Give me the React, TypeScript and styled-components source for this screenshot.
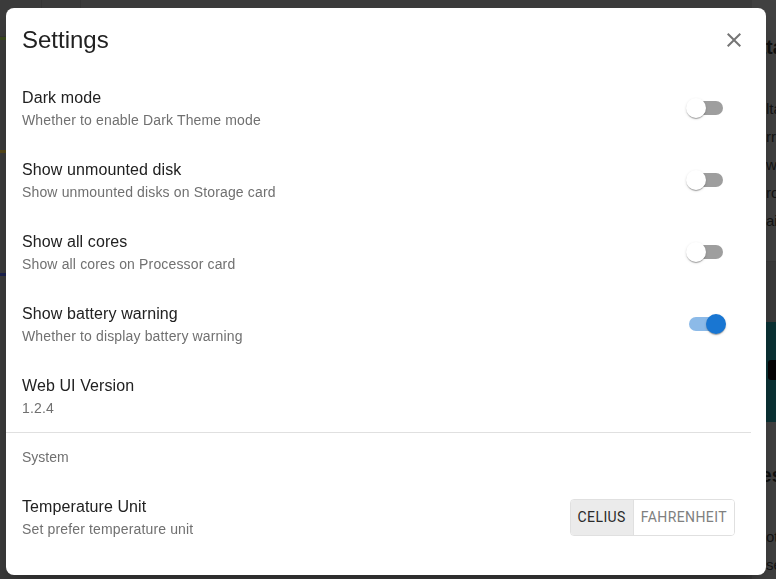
import { useState } from "react";
import styled, { createGlobalStyle } from "styled-components";

const GlobalStyle = createGlobalStyle`
  html, body {
    margin: 0;
    padding: 0;
    width: 776px;
    height: 579px;
    overflow: hidden;
    background: #3c3c3c;
    font-family: "Liberation Sans", Arial, sans-serif;
  }
  * {
    box-sizing: border-box;
  }
`;

type Setting = {
  key: string;
  title: string;
  desc: string;
};

const switchSettings: Setting[] = [
  { key: "dark", title: "Dark mode", desc: "Whether to enable Dark Theme mode" },
  { key: "disk", title: "Show unmounted disk", desc: "Show unmounted disks on Storage card" },
  { key: "cores", title: "Show all cores", desc: "Show all cores on Processor card" },
  { key: "battery", title: "Show battery warning", desc: "Whether to display battery warning" },
];

const App = () => {
  const [values, setValues] = useState<Record<string, boolean>>({
    dark: false,
    disk: false,
    cores: false,
    battery: true,
  });
  const [unit, setUnit] = useState<"celius" | "fahrenheit">("celius");

  const toggle = (key: string) => {
    setValues({ ...values, [key]: !values[key] });
  };

  return (
    <>
      <GlobalStyle />
      <Page>
        <LeftColumn>
          <TopBar>
            <TopTab $w={42} />
            <TopTab $w={39} />
          </TopBar>
          <Streak $color="#3b4a1e" />
          <Spacer $h={110} />
          <Streak $color="#57491a" />
          <Spacer $h={120} />
          <Streak $color="#1c2250" />
        </LeftColumn>
        <RightColumn>
          <BgCard $h={262}>
            <BgHeading>ata</BgHeading>
            <BgLines>
              <BgLine>ltage</BgLine>
              <BgLine>rrent</BgLine>
              <BgLine>wer</BgLine>
              <BgLine>roduct</BgLine>
              <BgLine>ail</BgLine>
            </BgLines>
          </BgCard>
          <Spacer $h={60} />
          <TealCard>
            <TealIcon />
          </TealCard>
          <BgCard $h={200}>
            <BgHeading $top={42}>les</BgHeading>
            <BgLines $top={40}>
              <BgLine>otal</BgLine>
              <BgLine>sed</BgLine>
            </BgLines>
          </BgCard>
        </RightColumn>
      </Page>

      <Backdrop>
        <Dialog>
          <DialogHeader>
            <DialogTitle>Settings</DialogTitle>
            <CloseButton aria-label="close">
              <svg width="24" height="24" viewBox="0 0 24 24">
                <path
                  fill="currentColor"
                  d="M19 6.41 17.59 5 12 10.59 6.41 5 5 6.41 10.59 12 5 17.59 6.41 19 12 13.41 17.59 19 19 17.59 13.41 12z"
                />
              </svg>
            </CloseButton>
          </DialogHeader>

          <List>
            {switchSettings.map((s) => (
              <ListItem key={s.key}>
                <ItemText>
                  <Primary>{s.title}</Primary>
                  <Secondary>{s.desc}</Secondary>
                </ItemText>
                <SwitchRoot onClick={() => toggle(s.key)}>
                  <Track $on={values[s.key]} />
                  <Thumb $on={values[s.key]} />
                </SwitchRoot>
              </ListItem>
            ))}
            <ListItem>
              <ItemText>
                <Primary>Web UI Version</Primary>
                <Secondary>1.2.4</Secondary>
              </ItemText>
            </ListItem>
          </List>

          <Divider />

          <List>
            <Subheader>System</Subheader>
            <ListItem>
              <ItemText>
                <Primary>Temperature Unit</Primary>
                <Secondary>Set prefer temperature unit</Secondary>
              </ItemText>
              <ToggleGroup>
                <ToggleButton
                  $selected={unit === "celius"}
                  onClick={() => setUnit("celius")}
                >
                  Celius
                </ToggleButton>
                <ToggleButton
                  $selected={unit === "fahrenheit"}
                  onClick={() => setUnit("fahrenheit")}
                >
                  Fahrenheit
                </ToggleButton>
              </ToggleGroup>
            </ListItem>
          </List>
        </Dialog>
      </Backdrop>
    </>
  );
};

export default App;

/* dimmed page behind the dialog */

const Page = styled.div`
  display: flex;
  width: 776px;
  height: 579px;
  overflow: hidden;
`;

const LeftColumn = styled.div`
  display: flex;
  flex-direction: column;
  width: 752px;
  flex-shrink: 0;
`;

const TopBar = styled.div`
  display: flex;
  height: 37px;
  flex-shrink: 0;
  border-bottom: 1px solid #353535;
`;

const TopTab = styled.div<{ $w: number }>`
  width: ${(p) => p.$w}px;
  border-right: 1px solid #363636;
`;

const Streak = styled.div<{ $color: string }>`
  height: 3px;
  width: 10px;
  flex-shrink: 0;
  background: ${(p) => p.$color};
`;

const Spacer = styled.div<{ $h: number }>`
  height: ${(p) => p.$h}px;
  flex-shrink: 0;
`;

const RightColumn = styled.div`
  display: flex;
  flex-direction: column;
  width: 200px;
  flex-shrink: 0;
`;

const BgCard = styled.div<{ $h: number }>`
  height: ${(p) => p.$h}px;
  flex-shrink: 0;
  background: #424242;
  padding-left: 3px;
  border-bottom: 1px solid #393939;
`;

const BgHeading = styled.div<{ $top?: number }>`
  margin-top: ${(p) => p.$top ?? 36}px;
  font-size: 20px;
  font-weight: bold;
  color: #101010;
`;

const BgLines = styled.div<{ $top?: number }>`
  display: flex;
  flex-direction: column;
  gap: 8px;
  margin-top: ${(p) => p.$top ?? 40}px;
  padding-left: 11px;
`;

const BgLine = styled.div`
  font-size: 15px;
  line-height: 20px;
  color: #141414;
`;

const TealCard = styled.div`
  height: 100px;
  flex-shrink: 0;
  background: #0b3336;
  padding: 38px 0 0 16px;
`;

const TealIcon = styled.div`
  width: 12px;
  height: 20px;
  background: #050505;
  border-radius: 3px;
`;

/* dialog */

const Backdrop = styled.div`
  position: fixed;
  inset: 0;
  display: flex;
  padding: 8px 10px 4px 6px;
`;

const Dialog = styled.div`
  flex: 1;
  display: flex;
  flex-direction: column;
  background: #fff;
  border-radius: 8px;
  box-shadow: 0 11px 15px -7px rgba(0, 0, 0, 0.2),
    0 24px 38px 3px rgba(0, 0, 0, 0.14);
  overflow: hidden;
`;

const DialogHeader = styled.div`
  display: flex;
  align-items: center;
  justify-content: space-between;
  height: 64px;
  flex-shrink: 0;
  padding: 0 18px 0 16px;
`;

const DialogTitle = styled.h2`
  margin: 0;
  font-size: 24px;
  font-weight: 400;
  line-height: 32px;
  color: #212121;
`;

const CloseButton = styled.button`
  display: flex;
  align-items: center;
  justify-content: center;
  width: 28px;
  height: 28px;
  padding: 0;
  border: none;
  background: transparent;
  color: #757575;
  cursor: pointer;
`;

const List = styled.div`
  display: flex;
  flex-direction: column;
`;

const ListItem = styled.div`
  display: flex;
  align-items: center;
  height: 72px;
  flex-shrink: 0;
  padding: 8px 31px 8px 16px;
`;

const ItemText = styled.div`
  flex: 1;
  display: flex;
  flex-direction: column;
`;

const Primary = styled.div`
  font-size: 16px;
  line-height: 24px;
  color: #212121;
  letter-spacing: 0.1px;
`;

const Secondary = styled.div`
  font-size: 14px;
  line-height: 20px;
  color: #707070;
  letter-spacing: 0.15px;
`;

const SwitchRoot = styled.div`
  position: relative;
  width: 58px;
  height: 38px;
  padding: 12px;
  cursor: pointer;
  flex-shrink: 0;
`;

const Track = styled.div<{ $on: boolean }>`
  width: 100%;
  height: 100%;
  border-radius: 7px;
  background: ${(p) => (p.$on ? "#1976d2" : "#000")};
  opacity: ${(p) => (p.$on ? 0.5 : 0.38)};
`;

const Thumb = styled.div<{ $on: boolean }>`
  position: absolute;
  top: 9px;
  left: 9px;
  width: 20px;
  height: 20px;
  border-radius: 50%;
  background: ${(p) => (p.$on ? "#1976d2" : "#fff")};
  transform: translateX(${(p) => (p.$on ? 20 : 0)}px);
  box-shadow: 0 2px 1px -1px rgba(0, 0, 0, 0.2), 0 1px 1px 0 rgba(0, 0, 0, 0.14),
    0 1px 3px 0 rgba(0, 0, 0, 0.12);
`;

const Divider = styled.hr`
  margin: 0 15px 0 0;
  border: none;
  border-top: 1px solid #e0e0e0;
`;

const Subheader = styled.div`
  height: 48px;
  line-height: 48px;
  padding: 0 16px;
  font-size: 14px;
  color: #707070;
`;

const ToggleGroup = styled.div`
  display: flex;
  height: 37px;
  border: 1px solid #e0e0e0;
  border-radius: 4px;
  overflow: hidden;
`;

const ToggleButton = styled.button<{ $selected: boolean }>`
  display: flex;
  align-items: center;
  height: 100%;
  padding: 0 7px;
  border: none;
  border-left: 1px solid #e0e0e0;
  background: ${(p) => (p.$selected ? "#ebebeb" : "#fff")};
  color: ${(p) => (p.$selected ? "#2a2a2a" : "#808080")};
  font-family: Roboto, "Liberation Sans", sans-serif;
  font-size: 14px;
  font-weight: 400;
  letter-spacing: 0.4px;
  text-transform: uppercase;
  cursor: pointer;

  &:first-child {
    border-left: none;
  }
`;
